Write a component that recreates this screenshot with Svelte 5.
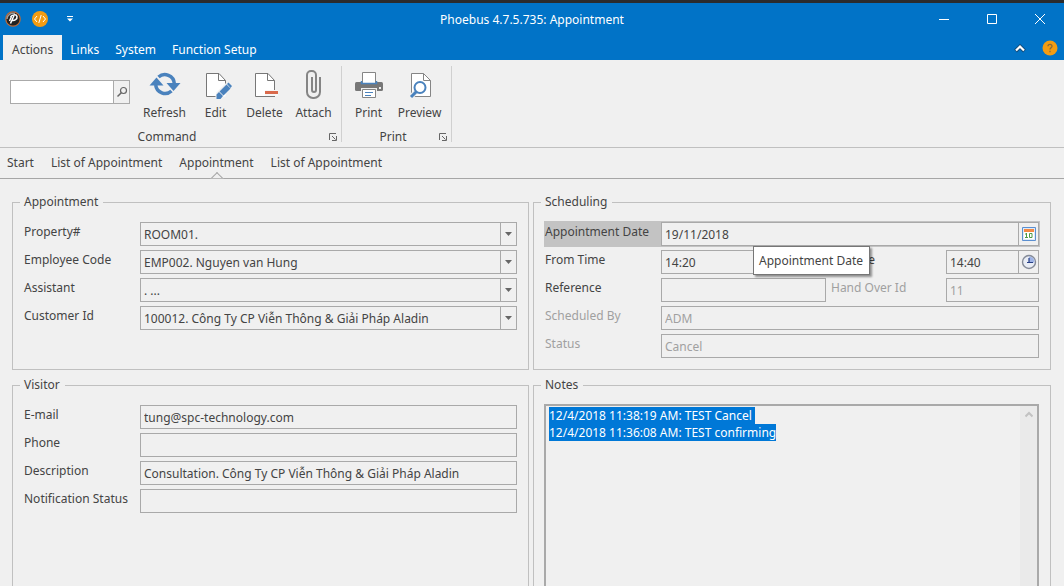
<script>
  import { onMount } from 'svelte';

  const menus = ['Links', 'System', 'Function Setup'];
  const documents = ['Start', 'List of Appointment', 'Appointment', 'List of Appointment'];
  const appointment = [
    { id: 'property', label: 'Property#', value: 'ROOM01.' },
    { id: 'employee', label: 'Employee Code', value: 'EMP002. Nguyen van Hung' },
    { id: 'assistant', label: 'Assistant', value: '. ...' },
    { id: 'customer', label: 'Customer Id', value: '100012. Công Ty CP Viễn Thông & Giải Pháp Aladin' }
  ];
  const visitor = [
    { id: 'email', label: 'E-mail', value: 'tung@spc-technology.com' },
    { id: 'phone', label: 'Phone', value: '' },
    { id: 'description', label: 'Description', value: 'Consultation. Công Ty CP Viễn Thông & Giải Pháp Aladin' },
    { id: 'notification', label: 'Notification Status', value: '' }
  ];
  const notes = '12/4/2018 11:38:19 AM: TEST Cancel\n12/4/2018 11:36:08 AM: TEST confirming';
  let notesBox;

  onMount(() => {
    notesBox.focus();
    notesBox.select();
  });
</script>

{#snippet clock()}
  <svg width="16" height="16" viewBox="0 0 16 16">
    <circle cx="8" cy="8" r="6.5" fill="#e9edf5" stroke="#858b98" stroke-width="1.4" />
    <path d="M8 2.5A5.5 5.5 0 0 1 13.5 8.5H8z" fill="#9fb4e6" />
    <path d="M8 4v5M6 8.5h6" stroke="#273f86" stroke-width="1.2" fill="none" />
  </svg>
{/snippet}

{#snippet launcher(name)}
  <button class="launcher" aria-label={name}>
    <svg width="8" height="8" viewBox="0 0 8 8" fill="none" stroke="#666">
      <path d="M.5 7V.5H7M3 3l3.500 3.500M7.500 3v4.500H3" />
    </svg>
  </button>
{/snippet}

<div class="app">
  <header>
    <div class="titlebar">
      <div class="quick">
        <svg width="16" height="16" viewBox="0 0 16 16">
          <circle cx="8" cy="8" r="7.2" fill="#222" stroke="#c66b34" stroke-width="1.2" />
          <path d="M2 8C2 4 6 1.500 10 2.500" stroke="#999" stroke-width="1.5" fill="none" />
          <path d="M5.500 6C7 3.500 11.500 3 12 5.500C12.300 8 10 9.700 7.500 9.500M9 4.500L5.500 12.500M6.500 5.500L4.500 10" stroke="#fff" stroke-width="1.5" fill="none" />
        </svg>
        <button aria-label="Developer tools">
          <svg width="16" height="16" viewBox="0 0 16 16">
            <circle cx="8" cy="8" r="8" fill="#f39c12" />
            <path d="M5 5L2.500 8L5 11M11 5l2.500 3L11 11M9.200 4L6.800 12" stroke="#fff" fill="none" />
          </svg>
        </button>
        <button aria-label="Customize toolbar">
          <svg width="6" height="6" viewBox="0 0 6 6" fill="#fff"><path d="M0 0h6v1H0zM0 2.500h6L3 5.500z" /></svg>
        </button>
      </div>
      <h1>Phoebus 4.7.5.735: Appointment</h1>
      <div class="window-buttons">
        <button aria-label="Minimize"><svg width="12" height="12"><path d="M1 6.500h10" /></svg></button>
        <button aria-label="Maximize"><svg width="12" height="12"><path d="M1.500 1.500h9v9h-9z" /></svg></button>
        <button aria-label="Close"><svg width="12" height="12"><path d="M1 1l10 10M11 1L1 11" /></svg></button>
      </div>
    </div>
    <nav class="menus" aria-label="Ribbon pages">
      <button class="page current">Actions</button>
      {#each menus as menu}<button class="page">{menu}</button>{/each}
      <span class="spacer"></span>
      <button class="collapse" aria-label="Collapse ribbon">
        <svg width="12" height="10" viewBox="0 0 12 10" fill="none">
          <path d="M1.500 8L6 3.500L10.500 8" stroke="#124a77" stroke-width="4" />
          <path d="M2 7.500L6 3.500L10 7.500" stroke="#fff" stroke-width="2.200" />
        </svg>
      </button>
      <button aria-label="Help">
        <svg width="16" height="16" viewBox="0 0 16 16" fill="none">
          <circle cx="8" cy="8" r="7.500" fill="#f39c12" />
          <path d="M6 6.200C6 3.700 10 3.700 10 6.200C10 7.700 8 7.700 8 9.500M8 10.800v1.400" stroke="#8a6a38" stroke-width="1.300" />
        </svg>
      </button>
    </nav>
  </header>

  <div class="ribbon">
    <section class="ribbon-group">
      <div class="tools">
        <div class="search">
          <input type="text" aria-label="Search" />
          <button aria-label="Find">
            <svg width="12" height="12" viewBox="0 0 12 12" fill="none" stroke="#666">
              <circle cx="7.500" cy="4.500" r="3" stroke-width="1.200" /><path d="M5.300 6.700L1.500 10.500" stroke-width="1.500" />
            </svg>
          </button>
        </div>
        <button class="tool wide">
          <svg width="32" height="32" viewBox="0 0 32 32" fill="#4a82bd">
            <path d="M9.500 8A9.500 9.500 0 0 1 25.300 14.500M6.700 16A9.500 9.500 0 0 0 22.500 22" fill="none" stroke="#4a82bd" stroke-width="3.500" />
            <path d="M.5 16.500L7.500 8.500L14.500 16.500zM17.500 14L24.500 22L31.500 14z" />
          </svg>
          <span>Refresh</span>
        </button>
        <button class="tool">
          <svg width="32" height="32" viewBox="0 0 32 32" fill="none">
            <path d="M6.500 4.500h12l7 7v16h-19z" fill="#fff" />
            <path d="M16 27.500H6.500v-23H19l6.500 7V15M18.500 4.500v7h7" stroke="#777" />
            <path d="M15.500 27.500L16.500 23.500L27.500 12.500L32 17L21 28L15.500 31z" fill="#efefef" />
            <path d="M16.500 31V26.500L19 24L23 28L20.500 31zM19.500 23.500L26.500 16.500L30.500 20.500L23.500 27.500zM27 16L28.500 14.500L32 18L30.500 20z" transform="translate(0 -1)" fill="#4a82bd" />
          </svg>
          <span>Edit</span>
        </button>
        <button class="tool">
          <svg width="32" height="32" viewBox="0 0 32 32" fill="none">
            <path d="M6.500 4.500h12l7 7v16h-19z" fill="#fff" />
            <path d="M26 27.500H6.500v-23H19l6.500 7V22M18.500 4.500v7h7" stroke="#777" />
            <path d="M16 21h13v6H16z" fill="#f7f7f7" /><path d="M16 22h13v3H16z" fill="#d9694b" />
          </svg>
          <span>Delete</span>
        </button>
        <button class="tool">
          <svg width="32" height="32" viewBox="0 0 32 32" fill="none" stroke="#858585" stroke-width="2">
            <path d="M22 8v15a6 6 0 0 1-6 6h-1a6 6 0 0 1-6-6V6a4 4 0 0 1 4-4h1a4 4 0 0 1 4 4v15a2 2 0 0 1-4 0V8" />
          </svg>
          <span>Attach</span>
        </button>
      </div>
      <div class="caption"><span>Command</span>{@render launcher('Command options')}</div>
    </section>
    <section class="ribbon-group">
      <div class="tools">
        <button class="tool wide">
          <svg width="32" height="32" viewBox="0 0 32 32" fill="none">
            <rect x="2" y="13" width="28" height="9" rx="1.500" fill="#777" />
            <path d="M9.500 14V3.500h13V14" fill="#fff" stroke="#858585" />
            <path d="M8.500 12v2.500h15V12" stroke="#4a82bd" stroke-width="1.500" />
            <path d="M8 19h16v10H8z" fill="#efefef" /><path d="M9.500 20.500h13v8h-13z" fill="#fff" stroke="#858585" />
            <path d="M12 23.500h8M12 26.500h6" stroke="#4a82bd" /><path d="M26 18h2v2h-2z" fill="#eee" />
          </svg>
          <span>Print</span>
        </button>
        <button class="tool">
          <svg width="32" height="32" viewBox="0 0 32 32" fill="none">
            <path d="M7.500 4.500h12l7 7v16h-19z" fill="#fff" stroke="#858585" /><path d="M19.500 4.500v7h7" stroke="#858585" />
            <circle cx="16" cy="18.500" r="7.500" fill="#fff" /><path d="M12.500 22L7 28" stroke="#efefef" stroke-width="5" />
            <circle cx="16" cy="18.500" r="5.500" fill="#fff" stroke="#4a82bd" stroke-width="2" /><path d="M12.500 22.500L7 28" stroke="#4a82bd" stroke-width="3" />
          </svg>
          <span>Preview</span>
        </button>
      </div>
      <div class="caption"><span>Print</span>{@render launcher('Print options')}</div>
    </section>
  </div>

  <nav class="documents" aria-label="Open documents">
    {#each documents as doc, i}
      <button class:active={i === 2}>{doc}</button>
    {/each}
  </nav>

  <main>
    <fieldset>
      <legend>Appointment</legend>
      {#each appointment as f}
        <div class="row">
          <label for={f.id}>{f.label}</label>
          <div class="field">
            <select id={f.id}><option>{f.value}</option></select>
            <span class="drop"><svg width="7" height="4" viewBox="0 0 7 4" fill="#666"><path d="M0 0h7L3.500 4z" /></svg></span>
          </div>
        </div>
      {/each}
    </fieldset>

    <fieldset>
      <legend>Scheduling</legend>
      <div class="row hot">
        <label for="date">Appointment Date</label>
        <div class="field">
          <input id="date" value="19/11/2018" />
          <button aria-label="Pick date">
            <svg width="14" height="14" viewBox="0 0 14 14">
              <path d="M.5.500h13v13H.5z" fill="#dfeaf8" stroke="#5b8fd0" />
              <path d="M2 2h10v10H2z" fill="#fff" /><path d="M2 2h10v3H2z" fill="#f28a45" />
              <path d="M4.500 6v5M3 7h1.500M3 10.500h3M7.500 6.500h2.500v4H7.500z" fill="none" stroke="#4d9a45" />
            </svg>
          </button>
        </div>
        <div class="tooltip" role="tooltip">Appointment Date</div>
      </div>
      <div class="row split">
        <label for="from">From Time</label>
        <div class="field"><input id="from" value="14:20" /><button aria-label="Pick start time">{@render clock()}</button></div>
        <label class="second" for="to">To Time</label>
        <div class="field"><input id="to" value="14:40" /><button aria-label="Pick end time">{@render clock()}</button></div>
      </div>
      <div class="row split">
        <label for="reference">Reference</label>
        <div class="field"><input id="reference" /></div>
        <label class="second off" for="handover">Hand Over Id</label>
        <div class="field"><input id="handover" value="11" disabled /></div>
      </div>
      <div class="row">
        <label class="off" for="scheduler">Scheduled By</label>
        <div class="field"><input id="scheduler" value="ADM" disabled /></div>
      </div>
      <div class="row">
        <label class="off" for="status">Status</label>
        <div class="field"><input id="status" value="Cancel" disabled /></div>
      </div>
    </fieldset>

    <fieldset class="open">
      <legend>Visitor</legend>
      {#each visitor as f}
        <div class="row">
          <label for={f.id}>{f.label}</label>
          <div class="field"><input id={f.id} value={f.value} /></div>
        </div>
      {/each}
    </fieldset>

    <fieldset class="open">
      <legend>Notes</legend>
      <div class="notes">
        <textarea aria-label="Notes" bind:this={notesBox} value={notes}></textarea>
        <div class="track">
          <svg width="8" height="7" viewBox="0 0 8 7" fill="none" stroke="#c2c2c2" stroke-width="2"><path d="M.5 5.500L4 2l3.500 3.500" /></svg>
        </div>
      </div>
    </fieldset>
  </main>
</div>

<style>
  :global(body) { margin: 0; }
  .app {
    display: flex;
    flex-direction: column;
    height: 100vh;
    overflow: hidden;
    background: #f0f0f0;
    color: #444;
    font: 12px/18px "Noto Sans", "Open Sans", sans-serif;
  }
  button, input, select, textarea {
    box-sizing: border-box;
    margin: 0;
    padding: 0;
    border: 0;
    border-radius: 0;
    outline: 0;
    background: none;
    color: inherit;
    font: inherit;
  }
  svg { display: block; flex: none; }
  header { border-top: 3px solid #2b2b2d; background: #0173c7; color: #fff; }
  .titlebar { display: grid; grid-template-columns: 1fr auto 1fr; align-items: center; height: 32px; }
  .quick { display: flex; align-items: center; gap: 11px; padding-left: 5px; }
  .quick button + button { margin-left: 8px; }
  h1 { margin: 0; padding-top: 2px; font-size: 12px; line-height: 18px; font-weight: 400; }
  .window-buttons { display: flex; justify-content: flex-end; }
  .window-buttons button { display: grid; place-items: center; width: 48px; height: 32px; }
  .window-buttons svg { fill: none; stroke: #fff; }
  .menus { display: flex; align-items: center; height: 25px; padding: 0 6px 0 3px; }
  .page { height: 25px; padding: 4px 8px 0; }
  .page.current { padding: 4px 9px 0; background: #f0f0f0; color: #444; }
  .spacer { flex: 1; }
  .collapse { margin-right: 16px; }

  .ribbon { display: flex; height: 81px; padding-top: 6px; border-bottom: 1px solid #c0c0c0; }
  .ribbon-group { display: flex; flex-direction: column; height: 76px; border-right: 1px solid #d0d0d0; }
  .tools { display: flex; flex: none; height: 60px; padding-right: 3px; }
  .ribbon-group + .ribbon-group .tools { padding-right: 7px; }
  .search { display: flex; box-sizing: border-box; width: 120px; height: 24px; margin: 14px 8px 0 10px; border: 1px solid #aaa; }
  .search input { flex: 1; min-width: 0; background: #fff; }
  .search button { display: grid; place-items: center; width: 16px; border-left: 1px solid #aaa; }
  .tool { display: flex; flex-direction: column; align-items: center; width: 49px; padding-top: 3px; line-height: 16px; }
  .tool span { margin-top: 4px; }
  .tool.wide { width: 53px; }
  .caption { display: flex; flex: none; align-items: center; height: 22px; padding-left: 5px; text-align: center; }
  .caption span { flex: 1; }
  .launcher { margin-right: 4px; }

  .documents { display: flex; gap: 17px; height: 30px; padding-left: 7px; border-bottom: 1px solid #a6a6a6; }
  .documents button { position: relative; height: 30px; }
  .active::after {
    content: "";
    position: absolute;
    left: 50%;
    bottom: -6px;
    width: 9px;
    height: 9px;
    margin-left: -4px;
    border: solid #a6a6a6;
    border-width: 1px 0 0 1px;
    background: #f0f0f0;
    clip-path: polygon(-2px -2px, 11px -2px, -2px 11px);
    transform: rotate(45deg);
  }

  main {
    display: grid;
    grid-template-columns: 517fr 518fr;
    grid-template-rows: auto 1fr;
    gap: 6px 4px;
    flex: 1;
    padding: 14px 13px 0 12px;
  }
  fieldset { min-width: 0; margin: 0; padding: 10px 11px 10px 10px; border: 1px solid #c0c0c0; }
  fieldset.open { border-bottom: 0; padding-bottom: 0; }
  legend { margin-left: -3px; padding: 0 5px 0 4px; }
  .row { position: relative; display: grid; grid-template-columns: 117px 1fr; height: 26px; margin-bottom: 2px; }
  fieldset:not(.open) .row:last-child { margin-bottom: 0; }
  .row.split { grid-template-columns: 117px 165fr 120px 93fr; }
  label { padding: 2px 0 0 1px; white-space: nowrap; }
  label.second { padding-left: 5px; }
  .off { color: #a0a0a0; }
  .field { display: flex; box-sizing: border-box; min-width: 0; height: 24px; margin-top: 1px; border: 1px solid #a9a9a9; }
  .field input, .field select { flex: 1; min-width: 0; padding: 2px 0 0 3px; appearance: none; }
  .field input:disabled { color: #a0a0a0; }
  .field button, .drop { display: grid; place-items: center; width: 20px; border-left: 1px solid #a9a9a9; }
  .field .drop { width: 15px; pointer-events: none; }
  .hot label { background: #c3c3c3; }
  .hot .field { box-shadow: 0 0 0 1px #c3c3c3; }
  .tooltip {
    position: absolute;
    z-index: 1;
    top: 25px;
    left: 209px;
    padding: 5px 6px 4px 5px;
    border: 1px solid #767676;
    background: #fff;
    box-shadow: 2px 2px 2px #0006;
  }
  .notes { display: flex; box-sizing: border-box; height: 100%; border: 2px solid #a9a9a9; border-bottom: 0; }
  .notes textarea { flex: 1; padding: 1px 0 0 3px; line-height: 17px; resize: none; }
  .notes textarea::selection { background: #0078d7; color: #fff; }
  .track { width: 17px; padding-top: 5px; background: #eaeaea; }
  .track svg { margin: 0 auto; }
</style>
